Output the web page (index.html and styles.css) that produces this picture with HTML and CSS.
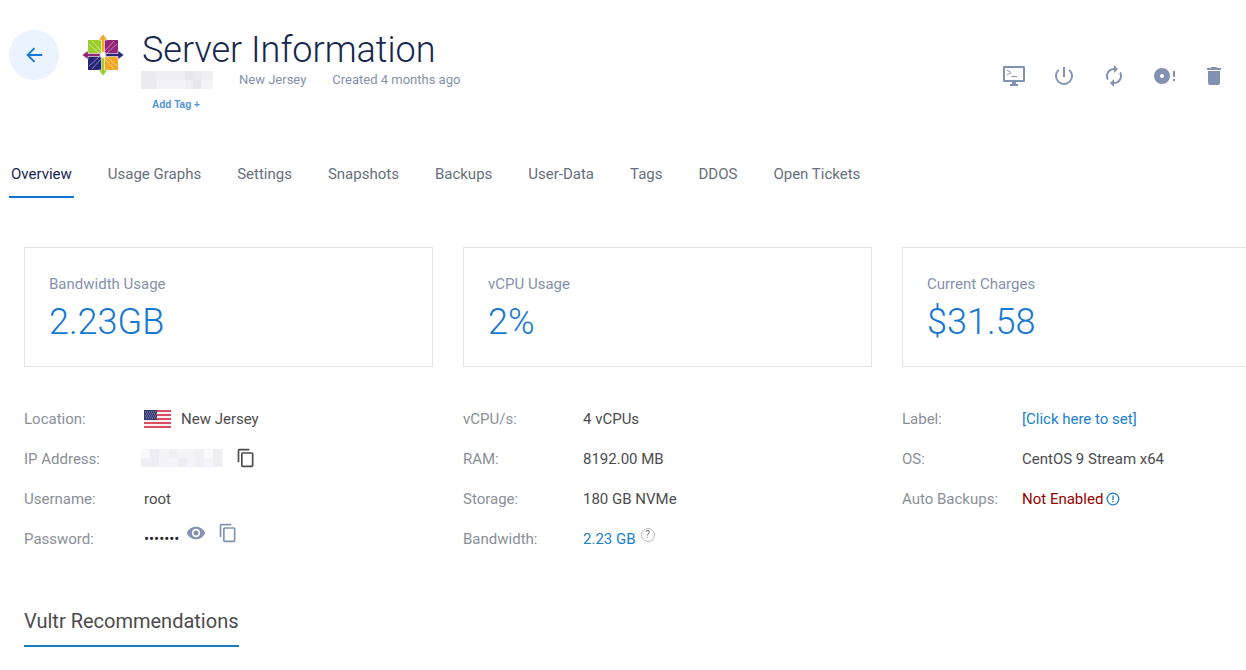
FILE: index.html
```
<!DOCTYPE html>
<html lang="en">

<head>
    <meta charset="UTF-8">
    <meta name="viewport" content="width=device-width, initial-scale=1.0">
    <title>Server Information</title>
    <link rel="stylesheet" href="styles.css">
</head>

<body>
    <header class="server-header">
        <a class="back" href="#" aria-label="Back">
            <svg width="24" height="24" viewBox="0 0 24 24"><path d="M21 12H5M12.500 4.500L5 12L12.500 19.500" fill="none" stroke="currentColor" stroke-width="2"/></svg>
        </a>

        <!-- CentOS -->
        <svg class="os-logo" width="42" height="42" viewBox="0 0 42 42" aria-hidden="true">
            <path d="M6 6h14.500v14.500H6z" fill="#9ccd2a"/>
            <path d="M21.500 6H36v14.500H21.500z" fill="#932279"/>
            <path d="M6 21.500h14.500V36H6z" fill="#262577"/>
            <path d="M21.500 21.500H36V36H21.500z" fill="#efa724"/>
            <path d="M21 0l4.500 6h-3v14h-3V6h-3z" fill="#efa724" stroke="#fff" stroke-width=".6"/>
            <path d="M42 21l-6 4.500v-3H22v-3h14v-3z" fill="#262577" stroke="#fff" stroke-width=".6"/>
            <path d="M21 42l-4.500-6h3V22h3v14h3z" fill="#9ccd2a" stroke="#fff" stroke-width=".6"/>
            <path d="M0 21l6-4.500v3h14v3H6v3z" fill="#932279" stroke="#fff" stroke-width=".6"/>
            <path d="M7 10l10 9M10 7l9 10M32 7l-9 10M35 10l-10 9M7 32l10-9M10 35l9-10M32 35l-9-10M35 32l-10-9" stroke="#fff" stroke-width=".8" opacity=".6"/>
            <path d="M21 17l1 2 2-1-1 2 2 1-2 1 1 2-2-1-1 2-1-2-2 1 1-2-2-1 2-1-1-2 2 1z" fill="#fff"/>
        </svg>

        <div class="server-title">
            <h1>Server Information</h1>
            <div class="server-meta">
                <svg class="masked" width="72" height="18" viewBox="0 0 72 18" aria-hidden="true">
                    <path d="M0 0h72v18H0z" fill="#efeff1"/>
                    <path d="M0 0h16v18H0zM52 0h8v9h-8z" fill="#ebebee"/>
                    <path d="M16 9h28v9H16zM60 9h12v9H60z" fill="#f3f3f5"/>
                    <path d="M44 0h8v9h-8zM52 9h8v9h-8z" fill="#e8e8eb"/>
                </svg>
                <span class="meta-location">New Jersey</span>
                <span>Created 4 months ago</span>
            </div>
            <button class="add-tag" type="button">Add Tag +</button>
        </div>

        <div class="actions">
            <button type="button" aria-label="View console">
                <svg width="24" height="24" viewBox="0 0 24 24"><path d="M2 3h20v14H2z" fill="none" stroke="currentColor" stroke-width="2" stroke-linejoin="round"/><path d="M10 17h4v3h2v2H8v-2h2z" fill="currentColor"/><path d="M5 6l4 2.500L5 11M9.500 12.500H15" fill="none" stroke="currentColor"/></svg>
            </button>
            <button type="button" aria-label="Power">
                <svg width="24" height="24" viewBox="0 0 24 24"><path d="M13 3h-2v10h2V3zm4.830 2.170l-1.420 1.420A6.920 6.920 0 0 1 19 12c0 3.870-3.130 7-7 7s-7-3.130-7-7c0-2.190 1.010-4.140 2.580-5.420L6.170 5.170A8.930 8.930 0 0 0 3 12a9 9 0 0 0 18 0c0-2.740-1.230-5.180-3.170-6.830z" fill="currentColor"/></svg>
            </button>
            <button type="button" aria-label="Restart">
                <svg width="24" height="24" viewBox="0 0 24 24"><path d="M12 6v3l4-4-4-4v3c-4.420 0-8 3.580-8 8 0 1.570.46 3.030 1.240 4.260L6.700 14.800A5.870 5.870 0 0 1 6 12c0-3.310 2.690-6 6-6zm6.760 1.740L17.300 9.200c.44.840.7 1.790.7 2.800 0 3.310-2.690 6-6 6v-3l-4 4 4 4v-3c4.420 0 8-3.580 8-8 0-1.570-.46-3.030-1.240-4.260z" fill="currentColor"/></svg>
            </button>
            <button type="button" aria-label="Reinstall">
                <svg width="24" height="24" viewBox="0 0 24 24"><path d="M10 4a8 8 0 1 0 0 16 8 8 0 0 0 0-16zm0 6a2 2 0 1 1 0 4 2 2 0 0 1 0-4zM21 7h2v6h-2zM21 15h2v2h-2z" fill="currentColor" fill-rule="evenodd"/></svg>
            </button>
            <button type="button" aria-label="Destroy">
                <svg width="24" height="24" viewBox="0 0 24 24"><path d="M6 19c0 1.100.9 2 2 2h8c1.100 0 2-.9 2-2V7H6v12zM19 4h-3.500l-1-1h-5l-1 1H5v2h14V4z" fill="currentColor"/></svg>
            </button>
        </div>
    </header>

    <nav class="tabs">
        <a class="active" href="#">Overview</a>
        <a href="#">Usage Graphs</a>
        <a href="#">Settings</a>
        <a href="#">Snapshots</a>
        <a href="#">Backups</a>
        <a href="#">User-Data</a>
        <a href="#">Tags</a>
        <a href="#">DDOS</a>
        <a href="#">Open Tickets</a>
    </nav>

    <main class="overview">
        <!-- usage cards -->
        <section class="columns">
            <div class="card">
                <div class="card-label">Bandwidth Usage</div>
                <div class="card-value">2.23GB</div>
            </div>
            <div class="card">
                <div class="card-label">vCPU Usage</div>
                <div class="card-value">2%</div>
            </div>
            <div class="card">
                <div class="card-label">Current Charges</div>
                <div class="card-value">$31.58</div>
            </div>
        </section>

        <!-- server details -->
        <section class="columns details">
            <dl>
                <dt>Location:</dt>
                <dd>
                    <svg class="flag" width="27" height="18" viewBox="0 0 27 18" aria-hidden="true">
                        <path d="M0 0h27v18H0z" fill="#f7eff1"/>
                        <path d="M0 1h27M0 5h27M0 9h27M0 13h27M0 17h27" stroke="#d8505f" stroke-width="2"/>
                        <path d="M0 0h13v10H0z" fill="#34366f"/>
                        <path d="M1 2h12M2 4h11M1 6h12M2 8h11" stroke="#9a9cc4" stroke-dasharray="1 1"/>
                    </svg>
                    New Jersey
                </dd>
                <dt>IP Address:</dt>
                <dd class="ip">
                    <svg class="masked" width="82" height="18" viewBox="0 0 82 18" aria-hidden="true">
                        <path d="M0 0h82v18H0z" fill="#f4f4f8"/>
                        <path d="M0 9h9v9H0zM28 0h9v9h-9zM54 0h9v18h-9z" fill="#f0f0f4"/>
                        <path d="M9 0h9v18H9zM37 9h9v9h-9zM72 0h9v18h-9z" fill="#ededf3"/>
                        <path d="M0 0h9v9H0zM63 0h9v9h-9z" fill="#f9f9fb"/>
                    </svg>
                    <button class="copy dark" type="button" aria-label="Copy IP address">
                        <svg width="20" height="20" viewBox="0 0 24 24"><path d="M16 1H4a2 2 0 0 0-2 2v14h2V3h12V1zm3 4H8a2 2 0 0 0-2 2v14c0 1.100.9 2 2 2h11a2 2 0 0 0 2-2V7a2 2 0 0 0-2-2zm0 16H8V7h11v14z" fill="currentColor"/></svg>
                    </button>
                </dd>
                <dt>Username:</dt>
                <dd>root</dd>
                <dt>Password:</dt>
                <dd class="password">
                    <span class="dots">•••••••</span>
                    <button class="show" type="button" aria-label="Show password">
                        <svg width="20" height="20" viewBox="0 0 24 24"><path d="M12 4.500C7 4.500 2.730 7.610 1 12c1.730 4.390 6 7.500 11 7.500s9.270-3.110 11-7.500c-1.730-4.390-6-7.500-11-7.500zM12 17a5 5 0 1 1 0-10 5 5 0 0 1 0 10zm0-8a3 3 0 1 0 0 6 3 3 0 0 0 0-6z" fill="currentColor"/></svg>
                    </button>
                    <button class="copy" type="button" aria-label="Copy password">
                        <svg width="20" height="20" viewBox="0 0 24 24"><path d="M16 1H4a2 2 0 0 0-2 2v14h2V3h12V1zm3 4H8a2 2 0 0 0-2 2v14c0 1.100.9 2 2 2h11a2 2 0 0 0 2-2V7a2 2 0 0 0-2-2zm0 16H8V7h11v14z" fill="currentColor"/></svg>
                    </button>
                </dd>
            </dl>
            <dl>
                <dt>vCPU/s:</dt>
                <dd>4 vCPUs</dd>
                <dt>RAM:</dt>
                <dd>8192.00 MB</dd>
                <dt>Storage:</dt>
                <dd>180 GB NVMe</dd>
                <dt>Bandwidth:</dt>
                <dd><a href="#">2.23 GB</a> <button class="help" type="button" aria-label="Bandwidth help">?</button></dd>
            </dl>
            <dl>
                <dt>Label:</dt>
                <dd><a href="#">[Click here to set]</a></dd>
                <dt>OS:</dt>
                <dd>CentOS 9 Stream x64</dd>
                <dt>Auto Backups:</dt>
                <dd>
                    <a class="disabled" href="#">Not Enabled</a>
                    <svg class="info" width="14" height="14" viewBox="0 0 14 14" aria-hidden="true"><circle cx="7" cy="7" r="5.800" fill="none" stroke="currentColor" stroke-width="1.300"/><path d="M7 3.500v4.500M7 9v1.500" stroke="currentColor" stroke-width="1.300"/></svg>
                </dd>
            </dl>
        </section>

        <h2 class="section-title">Vultr Recommendations</h2>
    </main>
</body>

</html>
```

FILE: styles.css
```
* {
    box-sizing: border-box;
    margin: 0;
    padding: 0;
}

body {
    overflow-x: hidden;
    background-color: #fff;
    color: #4c4c4e;
    font-family: Roboto, "Liberation Sans", sans-serif;
    font-size: 15px;
}

a {
    color: #1a7fce;
    text-decoration: none;
}

button {
    border: none;
    background: none;
    font-family: inherit;
    cursor: pointer;
}

svg {
    display: block;
}

/* header */
.server-header {
    display: flex;
    padding: 30px 7px 0 9px;
}

.back {
    display: flex;
    align-items: center;
    justify-content: center;
    width: 50px;
    height: 50px;
    border-radius: 50%;
    background-color: #ebf3fe;
    color: #1578dc;
}

.back svg {
    width: 22px;
}

.os-logo {
    margin: 4px 17px 0 23px;
}

.server-title h1 {
    padding-left: 1px;
    color: #16264c;
    font-size: 36px;
    font-weight: 300;
    line-height: 40px;
}

.server-meta {
    display: flex;
    align-items: center;
    gap: 26px;
    height: 20px;
    color: #8592ab;
    font-size: 13px;
    line-height: 18px;
}

.add-tag {
    display: block;
    margin-top: 4px;
    padding: 0 11px;
    color: #4f92e0;
    font-family: "Liberation Sans", Arial, sans-serif;
    font-size: 10px;
    font-weight: 700;
    line-height: 22px;
}

.actions {
    display: flex;
    margin-top: 21px;
    margin-left: auto;
}

.actions button {
    display: flex;
    align-items: center;
    justify-content: center;
    width: 50px;
    height: 50px;
    color: #8391b3;
}

/* tabs */
.tabs {
    display: flex;
    gap: 32px;
    margin-top: 40px;
    padding-left: 9px;
}

.tabs a {
    padding: 0 2px 4px;
    border-bottom: 2px solid transparent;
    color: #686f7b;
    line-height: 36px;
}

.tabs .active {
    border-color: #1173d4;
    color: #16264c;
}

/* overview */
.overview {
    padding: 49px 0 0 24px;
}

/* the third column runs past the right edge of the window */
.columns {
    display: grid;
    grid-template-columns: repeat(3, 1fr);
    gap: 30px;
    margin-right: -65px;
}

.card {
    padding: 24px;
    border: 1px solid #e2e4e7;
}

.card-label {
    color: #8592ab;
    line-height: 24px;
}

.card-value {
    padding-top: 4px;
    color: #1778d3;
    font-size: 36px;
    font-weight: 300;
    line-height: 44px;
}

.card {
    padding-bottom: 22px;
}

.details {
    margin-top: 32px;
}

.details dl {
    display: grid;
    grid-template-columns: 120px 1fr;
    grid-auto-rows: 40px;
    align-items: center;
    align-content: start;
}

.details dt {
    color: #8a8f98;
}

.details dd {
    display: flex;
    align-items: center;
}

.flag {
    margin-right: 10px;
}

.ip .masked {
    margin-left: -3px;
}

.copy {
    color: #8391b3;
}

.ip {
    padding-bottom: 2px;
}

.dark {
    margin-left: 13px;
    color: #4c4c4e;
}

.password {
    padding-bottom: 12px;
}

.dots {
    padding-top: 12px;
    color: #222;
}

.show {
    margin: 0 12px 0 7px;
    color: #8391b3;
}

.help {
    width: 14px;
    height: 14px;
    margin: 0 0 9px 5px;
    border: 1px solid #bbb;
    border-radius: 50%;
    color: #777;
    font-size: 10px;
    line-height: 12px;
}

.details .disabled {
    color: #970000;
}

.info {
    margin-left: 3px;
    color: #1a7fce;
}

.section-title {
    width: fit-content;
    margin-top: 47px;
    padding-bottom: 9px;
    border-bottom: 2px solid #187fb8;
    font-size: 20px;
    font-weight: 400;
    line-height: 30px;
}
```
